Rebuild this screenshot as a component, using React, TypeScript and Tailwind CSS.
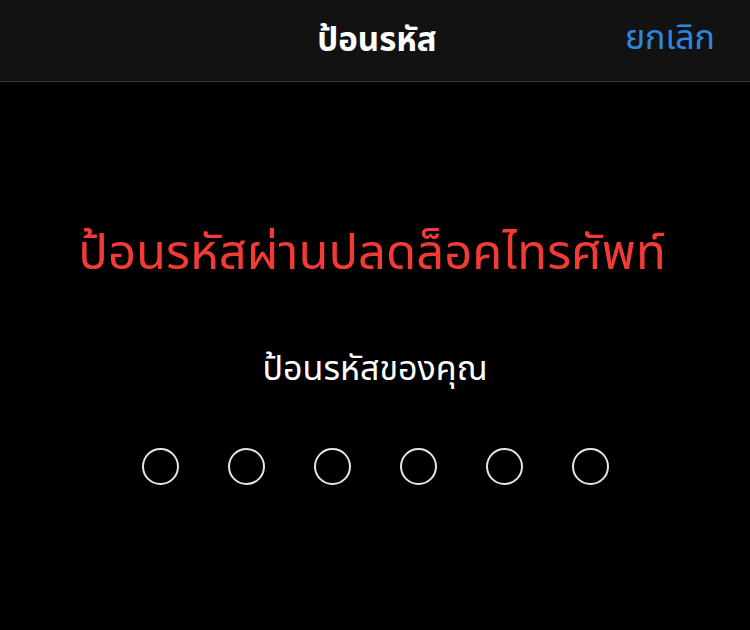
import React from "react";

export default function App() {
  const font = { fontFamily: '"Noto Sans Thai", "Noto Sans Thai UI", Thonburi, "Noto Sans", sans-serif' };
  return (
    <div className="w-[750px] h-[630px] bg-black flex flex-col" style={font}>
      <div className="h-[82px] shrink-0 bg-[#121212] border-b border-[#3a3a3c] relative flex items-center justify-center">
        <span className="text-white text-[33px] font-bold leading-[44px] ml-[4px]">ป้อนรหัส</span>
        <span className="absolute right-[35px] top-[17px] text-[#2f86e0] text-[34px] leading-[44px]">ยกเลิก</span>
      </div>
      <div className="flex flex-col items-center">
        <div className="mt-[142px] text-[#f23b36] text-[49px] leading-[60px] -ml-[6px]">ป้อนรหัสผ่านปลดล็อคไทรศัพท์</div>
        <div className="mt-[64px] text-white text-[34px] leading-[44px]">ป้อนรหัสของคุณ</div>
        <div className="mt-[56px] flex gap-[49px]">
          {[0, 1, 2, 3, 4, 5].map((i) => (
            <div key={i} className="w-[37px] h-[37px] rounded-full border-2 border-[#e5e5e5]" />
          ))}
        </div>
      </div>
    </div>
  );
}
